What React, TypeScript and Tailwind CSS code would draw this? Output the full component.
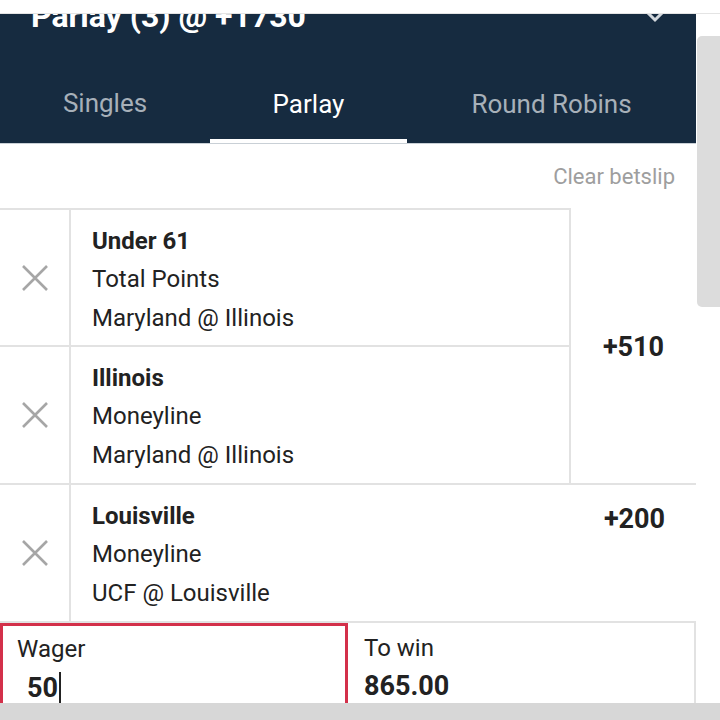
const legs = [
  { pick: "Under 61", market: "Total Points", game: "Maryland @ Illinois", h: "h-[137px]" },
  { pick: "Illinois", market: "Moneyline", game: "Maryland @ Illinois", h: "h-[136px]" },
];

const LegText = ({ pick, market, game }: { pick: string; market: string; game: string }) => (
  <div className="pt-[12px] pl-[21px] text-[24px] leading-[38px] text-[#222]">
    <div className="font-bold">{pick}</div>
    <div className="leading-[39px]">{market}</div>
    <div>{game}</div>
  </div>
);

const RemoveCell = () => (
  <div className="w-[71px] shrink-0 border-r-2 border-[#e2e2e2] flex items-center justify-center">
    <svg width="28" height="28" viewBox="0 0 28 28">
      <path d="M2 2 L26 26 M26 2 L2 26" stroke="#a6a6a6" strokeWidth="2.6" />
    </svg>
  </div>
);

const App = () => {
  return (
    <div className="w-[720px] h-[720px] overflow-hidden bg-white flex flex-col font-['Roboto',sans-serif]">
      <div className="h-[14px] shrink-0 border-b border-[#e4e4e4]" />
      <div className="flex flex-1 min-h-0">
        <div className="w-[696px] shrink-0 flex flex-col">
          <div className="bg-[#162b40] shrink-0 border-b border-[#c9d0d6]">
            <div className="h-[50px] overflow-hidden flex justify-between pl-[31px] pr-[30px]">
              <div className="-mt-[14px] text-[32px] leading-none font-bold text-white">
                Parlay (3) @ +1730
              </div>
              <svg className="-mt-[5px]" width="22" height="14" viewBox="0 0 22 14">
                <path d="M2 2 L11 11 L20 2" fill="none" stroke="#d3d8dd" strokeWidth="3" />
              </svg>
            </div>
            <div className="flex h-[79px] text-[26px]">
              <div className="w-[210px] flex items-center justify-center text-[#a7b0b9]">Singles</div>
              <div className="w-[197px] flex items-center justify-center text-white border-b-4 border-white pt-[6px]">
                Parlay
              </div>
              <div className="w-[289px] flex items-center justify-center text-[#a7b0b9] pt-[2px]">
                Round Robins
              </div>
            </div>
          </div>

          <div className="h-[64px] shrink-0 flex items-center justify-end pr-[21px] text-[22px] text-[#9e9e9e]">
            Clear betslip
          </div>

          <div className="flex border-b-2 border-[#e2e2e2] shrink-0">
            <div className="w-[571px] border-t-2 border-r-2 border-[#e2e2e2]">
              {legs.map((leg, i) => (
                <div
                  key={leg.pick}
                  className={`flex ${leg.h} ${i === 0 ? "border-b-2 border-[#e2e2e2]" : ""}`}
                >
                  <RemoveCell />
                  <LegText {...leg} />
                </div>
              ))}
            </div>
            <div className="flex-1 flex items-center justify-center pt-[4px] text-[27px] font-bold text-[#222]">
              +510
            </div>
          </div>

          <div className="flex h-[138px] border-b-2 border-[#e2e2e2] shrink-0">
            <RemoveCell />
            <div className="flex-1 flex justify-between">
              <LegText pick="Louisville" market="Moneyline" game="UCF @ Louisville" />
              <div className="w-[123px] text-center pt-[14px] text-[27px] font-bold text-[#222]">+200</div>
            </div>
          </div>

          <div className="flex shrink-0">
            <div className="w-[348px] h-[90px] border-[3px] border-[#d3304a] pl-[14px] pt-[8px]">
              <div className="text-[24px] leading-[30px] text-[#222]">Wager</div>
              <div className="flex items-center pl-[10px]">
                <span className="text-[27px] leading-[36px] font-bold text-[#222]">50</span>
                <span className="w-[2px] h-[40px] bg-[#222] ml-[1px] mt-[8px]" />
              </div>
            </div>
            <div className="flex-1 h-[90px] border-r-2 border-[#e2e2e2] pl-[16px] pt-[10px]">
              <div className="text-[24px] leading-[30px] text-[#222]">To win</div>
              <div className="mt-[5px] text-[27px] leading-[36px] font-bold text-[#222]">865.00</div>
            </div>
          </div>
        </div>
        <div className="flex-1 pt-[22px]">
          <div className="h-[271px] ml-[1px] bg-[#dcdcdc] rounded-l-[5px]" />
        </div>
      </div>
      <div className="h-[17px] shrink-0 bg-[#d7d7d7]" />
    </div>
  );
};

export default App;
